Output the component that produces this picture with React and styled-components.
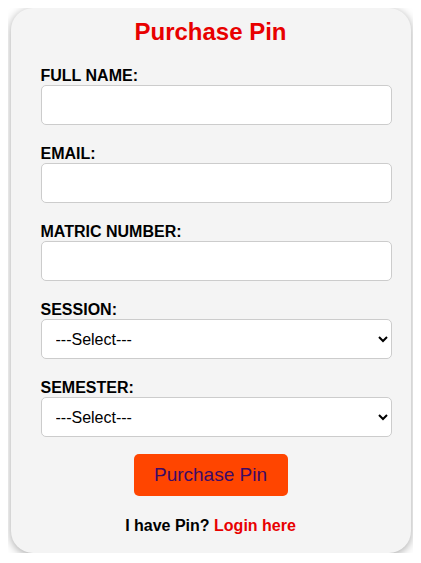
import styled, { createGlobalStyle } from "styled-components";

const GlobalStyle = createGlobalStyle`
  body {
    margin: 8px;
    background: #ffffff;
    font-family: "Liberation Sans", Arial, sans-serif;
  }
`;

export default function App() {
  const fields = [
    { label: "FULL NAME:", type: "text" },
    { label: "EMAIL:", type: "email" },
    { label: "MATRIC NUMBER:", type: "text" },
  ];

  return (
    <>
      <GlobalStyle />
      <Card>
        <Title>Purchase Pin</Title>
        <Form onSubmit={(e) => e.preventDefault()}>
          {fields.map((f) => (
            <Field key={f.label}>
              <Label>{f.label}</Label>
              <Input type={f.type} />
            </Field>
          ))}
          <Field>
            <Label>SESSION:</Label>
            <Select defaultValue="">
              <option value="">---Select---</option>
            </Select>
          </Field>
          <Field>
            <Label>SEMESTER:</Label>
            <Select defaultValue="">
              <option value="">---Select---</option>
            </Select>
          </Field>
          <Submit type="submit">Purchase Pin</Submit>
        </Form>
        <Footer>
          I have Pin? <LoginLink href="#">Login here</LoginLink>
        </Footer>
      </Card>
    </>
  );
}

const Card = styled.div`
  width: 400px;
  margin: 0 auto;
  box-sizing: border-box;
  padding: 10px 30px 18px;
  background: #f4f4f4;
  border-radius: 22px;
  box-shadow: 0 2px 10px rgba(0, 0, 0, 0.35);
`;

const Title = styled.h2`
  margin: 0 0 21px;
  text-align: center;
  color: #e80000;
  font-size: 24px;
  font-weight: bold;
  line-height: 28px;
`;

const Form = styled.form`
  display: flex;
  flex-direction: column;
`;

const Field = styled.div`
  display: flex;
  flex-direction: column;
  gap: 1px;
  margin-bottom: 20px;

  &:last-of-type {
    margin-bottom: 17px;
  }
`;

const Label = styled.label`
  font-size: 16px;
  font-weight: bold;
  color: #000;
  line-height: 17px;
`;

/* the fields run 11px past the right padding, as in the original page */
const Input = styled.input`
  width: calc(100% + 11px);
  height: 40px;
  box-sizing: border-box;
  padding: 10px;
  border: 1px solid #cccccc;
  border-radius: 5px;
  background: #fff;
  font-family: "Liberation Sans", Arial, sans-serif;
  font-size: 16px;
  outline: none;
`;

const Select = styled.select`
  width: calc(100% + 11px);
  height: 40px;
  box-sizing: border-box;
  padding: 0 6px 0 10px;
  border: 1px solid #cccccc;
  border-radius: 5px;
  background: #fff;
  color: #000;
  font-family: "Liberation Sans", Arial, sans-serif;
  font-size: 16px;
  outline: none;
`;

const Submit = styled.button`
  align-self: center;
  width: 154px;
  height: 42px;
  border: none;
  border-radius: 5px;
  background: #ff4500;
  color: #3d0a66;
  font-family: "Liberation Sans", Arial, sans-serif;
  font-size: 19px;
  cursor: pointer;
`;

const Footer = styled.p`
  margin: 20px 0 0;
  text-align: center;
  font-size: 16px;
  font-weight: bold;
  color: #000;
  line-height: 19px;
`;

const LoginLink = styled.a`
  color: #e80000;
  text-decoration: none;
`;
